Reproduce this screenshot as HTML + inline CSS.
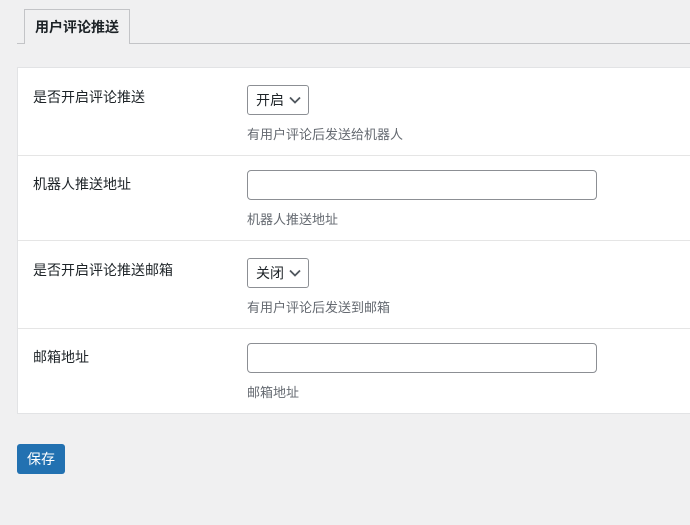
<!DOCTYPE html>
<html><head><meta charset="utf-8"><style>
*{box-sizing:border-box;margin:0;padding:0}
body{width:690px;height:525px;background:#f0f0f1;font-family:"Liberation Sans","Noto Sans CJK SC",sans-serif;font-size:13px;color:#1d2327;position:relative;overflow:hidden}
.line{position:absolute;left:17px;right:0;top:43px;border-top:1px solid #c3c4c7}
.tab{position:absolute;left:24px;top:9px;width:106px;height:35px;border:1px solid #c3c4c7;border-bottom:none;background:#f0f0f1;font-weight:bold;font-size:14px;line-height:34px;text-align:center}
.card{position:absolute;left:17px;top:67px;width:680px;height:347px;background:#fff;border:1px solid #e2e3e5}
.row{position:absolute;left:0;right:0;border-bottom:1px solid #e5e5e5}
.lab{position:absolute;left:15px;top:19px;font-size:14px}
.sel{position:absolute;left:229px;width:62px;height:30px;border:1px solid #8c8f94;border-radius:3px;padding-left:8px;line-height:28px;font-size:14px}
.sel svg{position:absolute;right:7px;top:10px}
.inp{position:absolute;left:229px;width:350px;height:30px;border:1px solid #8c8f94;border-radius:4px}
.desc{position:absolute;left:229px;color:#646970}
.btn{position:absolute;left:17px;top:444px;width:48px;height:30px;background:#2271b1;border-radius:3px;color:#fff;line-height:30px;text-align:center;font-size:14px}
</style></head><body>
<div class="line"></div>
<div class="tab">用户评论推送</div>
<div class="card">
<div class="row" style="top:0;height:88px"><div class="lab">是否开启评论推送</div><div class="sel" style="top:17px">开启<svg width="12" height="8"><path d="M1 1.5l5 5 5-5" stroke="#50575e" stroke-width="1.8" fill="none"/></svg></div><div class="desc" style="top:56px">有用户评论后发送给机器人</div></div>
<div class="row" style="top:88px;height:85px"><div class="lab" style="top:18px">机器人推送地址</div><div class="inp" style="top:14px"></div><div class="desc" style="top:53px">机器人推送地址</div></div>
<div class="row" style="top:173px;height:88px"><div class="lab">是否开启评论推送邮箱</div><div class="sel" style="top:17px">关闭<svg width="12" height="8"><path d="M1 1.5l5 5 5-5" stroke="#50575e" stroke-width="1.8" fill="none"/></svg></div><div class="desc" style="top:56px">有用户评论后发送到邮箱</div></div>
<div class="row" style="top:261px;height:85px;border:none"><div class="lab" style="top:18px">邮箱地址</div><div class="inp" style="top:14px"></div><div class="desc" style="top:53px">邮箱地址</div></div>
</div>
<div class="btn">保存</div>
</body></html>
